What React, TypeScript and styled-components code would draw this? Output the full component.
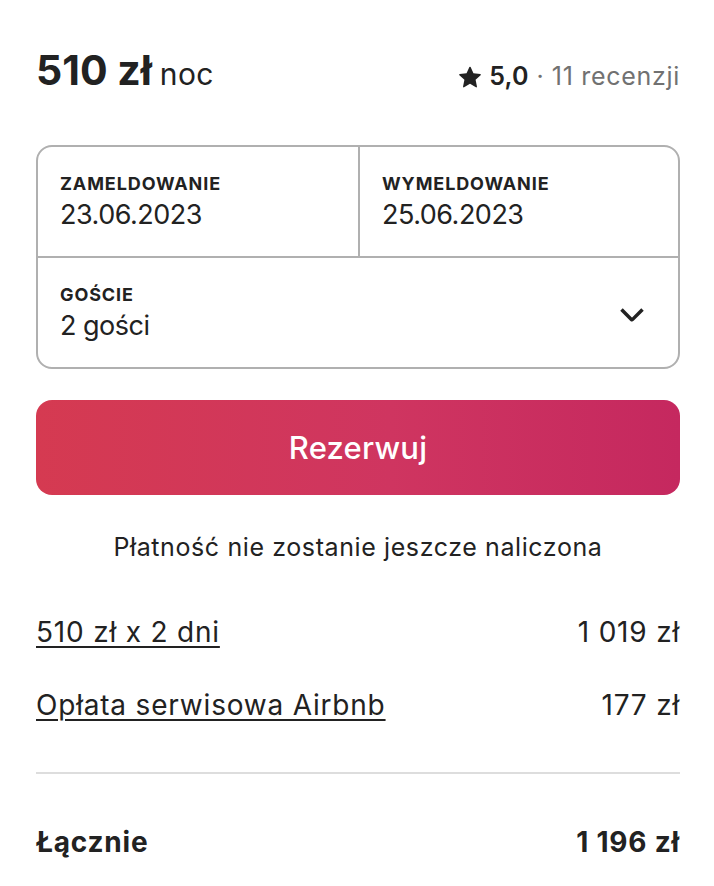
import React from "react";
import styled, { createGlobalStyle } from "styled-components";

const Global = createGlobalStyle`
  html, body { margin: 0; padding: 0; background: #ffffff; }
  body { font-family: Inter, "Noto Sans", sans-serif; color: #222222; }
`;

const Page = styled.div`
  padding: 45px 34px 0 36px;
  display: flex;
  flex-direction: column;
`;

const Header = styled.div`
  display: flex;
  justify-content: space-between;
  align-items: baseline;
  height: 60px;
`;

const Price = styled.div`
  display: flex;
  align-items: baseline;
  gap: 8px;
`;

const PriceValue = styled.span`
  font-size: 41px;
  font-weight: 700;
  letter-spacing: 0px;
  line-height: 50px;
`;

const PriceUnit = styled.span`
  font-size: 30px;
  font-weight: 400;
  letter-spacing: 0.4px;
`;

const Rating = styled.div`
  display: flex;
  align-items: baseline;
  gap: 8px;
  font-size: 25px;
`;

const Star = styled.svg`
  width: 22px;
  height: 22px;
  align-self: center;
  margin-top: 2px;
`;

const RatingValue = styled.span`
  font-weight: 600;
  letter-spacing: 0.2px;
`;

const Dot = styled.span`
  color: #717171;
`;

const Reviews = styled.span`
  color: #717171;
  letter-spacing: 0.7px;
`;

const Picker = styled.div`
  margin-top: 40px;
  border: 2px solid #b0b0b0;
  border-radius: 16px;
  display: grid;
  grid-template-columns: 1fr 1fr;
  overflow: hidden;
`;

const Field = styled.div<{ $wide?: boolean; $divider?: boolean }>`
  grid-column: ${(p) => (p.$wide ? "1 / span 2" : "auto")};
  border-left: ${(p) => (p.$divider ? "2px solid #b0b0b0" : "none")};
  border-top: ${(p) => (p.$wide ? "2px solid #b0b0b0" : "none")};
  height: ${(p) => (p.$wide ? "111px" : "109px")};
  padding: 0 22px;
  display: flex;
  align-items: center;
  justify-content: space-between;
  box-sizing: border-box;
`;

const FieldText = styled.div`
  display: flex;
  flex-direction: column;
  gap: 4px;
`;

const Label = styled.div`
  font-size: 18px;
  font-weight: 700;
  letter-spacing: 0.9px;
  line-height: 22px;
`;

const Value = styled.div`
  font-size: 27px;
  font-weight: 400;
  letter-spacing: -0.5px;
  line-height: 32px;
`;

const Chevron = styled.svg`
  width: 28px;
  height: 28px;
  margin-right: 10px;
`;

const BookButton = styled.button`
  margin-top: 31px;
  height: 95px;
  border: none;
  border-radius: 16px;
  background: linear-gradient(to right, #d53a51 0%, #cf3560 55%, #c5285f 100%);
  color: #ffffff;
  font-family: inherit;
  font-size: 31px;
  font-weight: 500;
  letter-spacing: 0.2px;
  cursor: pointer;
`;

const Note = styled.div`
  margin-top: 35px;
  text-align: center;
  font-size: 25px;
  letter-spacing: 0.6px;
  line-height: 34px;
`;

const Lines = styled.div`
  margin-top: 51px;
  display: flex;
  flex-direction: column;
  gap: 39px;
`;

const Line = styled.div`
  display: flex;
  justify-content: space-between;
  align-items: baseline;
  font-size: 28px;
  line-height: 34px;
  letter-spacing: 0.8px;
`;

const LineLabel = styled.span`
  text-decoration: underline;
  text-decoration-thickness: 2px;
  text-underline-offset: 4px;
`;

const Divider = styled.hr`
  margin: 50px 0 0;
  border: none;
  border-top: 2px solid #dddddd;
`;

const Total = styled.div`
  margin-top: 51px;
  display: flex;
  justify-content: space-between;
  align-items: baseline;
  font-size: 28px;
  font-weight: 700;
  line-height: 34px;
  letter-spacing: 0.8px;
`;

export default function App() {
  return (
    <>
      <Global />
      <Page>
        <Header>
          <Price>
            <PriceValue>510 zł</PriceValue>
            <PriceUnit>noc</PriceUnit>
          </Price>
          <Rating>
            <Star viewBox="0 0 32 32" aria-hidden="true">
              <path
                fill="#222222"
                d="M15.1 1.58l-4.13 8.88-9.86 1.27a1 1 0 0 0-.54 1.740l7.3 6.57-1.97 9.85a1 1 0 0 0 1.48 1.06l8.62-5 8.63 5a1 1 0 0 0 1.48-1.06l-1.97-9.85 7.3-6.57a1 1 0 0 0-.55-1.73l-9.86-1.28-4.12-8.88a1 1 0 0 0-1.82 0z"
              />
            </Star>
            <RatingValue>5,0</RatingValue>
            <Dot>·</Dot>
            <Reviews>11 recenzji</Reviews>
          </Rating>
        </Header>

        <Picker>
          <Field>
            <FieldText>
              <Label>ZAMELDOWANIE</Label>
              <Value>23.06.2023</Value>
            </FieldText>
          </Field>
          <Field $divider>
            <FieldText>
              <Label>WYMELDOWANIE</Label>
              <Value>25.06.2023</Value>
            </FieldText>
          </Field>
          <Field $wide>
            <FieldText>
              <Label>GOŚCIE</Label>
              <Value>2 gości</Value>
            </FieldText>
            <Chevron viewBox="0 0 32 32" aria-hidden="true">
              <path
                fill="none"
                stroke="#222222"
                strokeWidth="4"
                d="M28 12 16.7 23.3a1 1 0 0 1-1.4 0L4 12"
              />
            </Chevron>
          </Field>
        </Picker>

        <BookButton>Rezerwuj</BookButton>

        <Note>Płatność nie zostanie jeszcze naliczona</Note>

        <Lines>
          <Line>
            <LineLabel>510 zł x 2 dni</LineLabel>
            <span>1 019 zł</span>
          </Line>
          <Line>
            <LineLabel>Opłata serwisowa Airbnb</LineLabel>
            <span>177 zł</span>
          </Line>
        </Lines>

        <Divider />

        <Total>
          <span>Łącznie</span>
          <span>1 196 zł</span>
        </Total>
      </Page>
    </>
  );
}
